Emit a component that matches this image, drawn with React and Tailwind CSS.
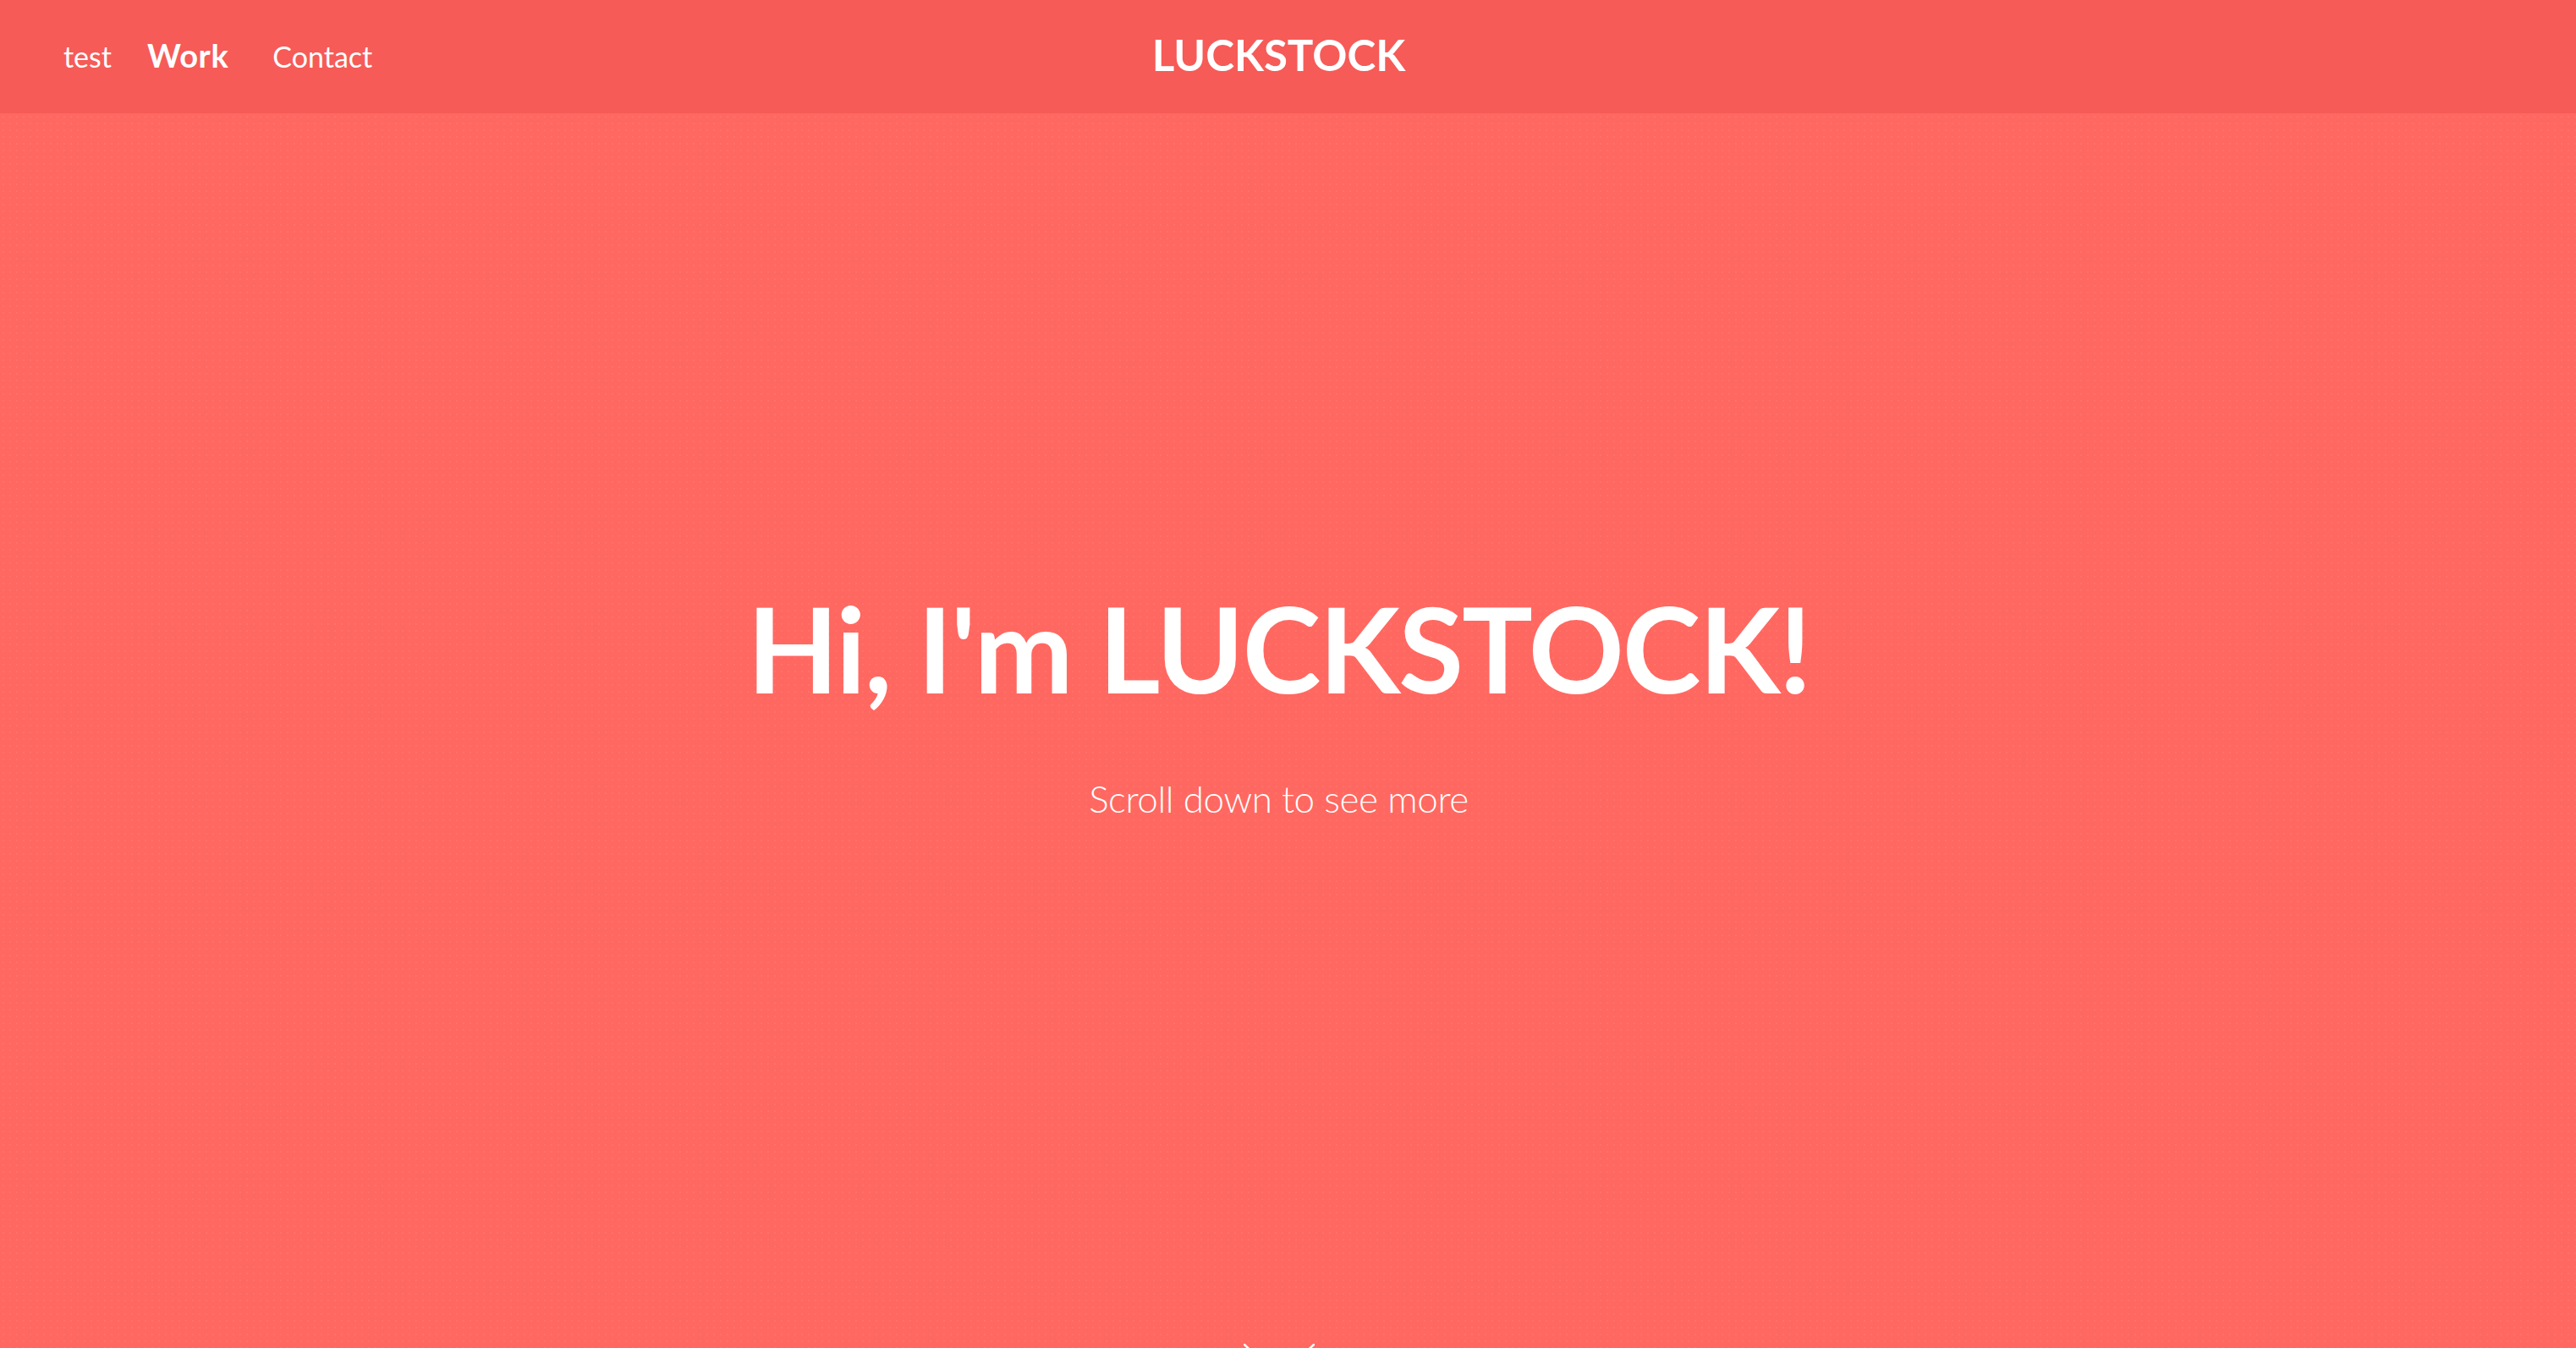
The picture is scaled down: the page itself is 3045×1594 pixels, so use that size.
import React from 'react';

const navLinks = [
    { label: 'test', className: 'font-normal text-[34px]' },
    { label: 'Work', className: 'font-bold text-[38px] tracking-[0.6px] ml-[42px]' },
    { label: 'Contact', className: 'font-normal text-[34px] ml-[52px]' },
];

function Header() {
    return (
        <header className="h-[134px] bg-[#f65b57] flex items-center pr-[22px] pb-[4px] relative">
            <nav className="flex items-baseline pl-[75px] flex-1">
                {navLinks.map((link) => (
                    <a key={link.label} href="#" className={`text-white leading-none ${link.className}`}>
                        {link.label}
                    </a>
                ))}
            </nav>
            <div className="absolute inset-y-0 left-0 right-[22px] pb-[6px] flex items-center justify-center pointer-events-none">
                <span className="text-white text-[51px] font-bold leading-none">LUCKSTOCK</span>
            </div>
        </header>
    );
}

function ScrollChevron() {
    return (
        <div className="mt-auto h-[5px] flex justify-center">
            <svg width="84" height="42" viewBox="0 0 84 42" fill="none" className="shrink-0">
                <path d="M1 1 L42 40 L83 1" stroke="white" strokeWidth="2.5" strokeLinecap="round" />
            </svg>
        </div>
    );
}

export default function App() {
    return (
        <div className="w-full bg-[#ff6861] font-['Lato',sans-serif] overflow-hidden">
            <Header />
            <section className="h-[1460px] flex flex-col pr-[22px] overflow-hidden bg-[radial-gradient(circle,rgba(255,255,255,0.06)_1px,transparent_1.6px)] bg-[length:8px_8px]">
                <div className="pt-[562px] flex flex-col items-center text-white">
                    <h1 className="text-[140px] font-bold leading-none tracking-[-2px]">Hi, I'm LUCKSTOCK!</h1>
                    <p className="mt-[86px] text-[44px] font-light leading-none tracking-[-0.4px]">Scroll down to see more</p>
                </div>
                <ScrollChevron />
            </section>
        </div>
    );
}
